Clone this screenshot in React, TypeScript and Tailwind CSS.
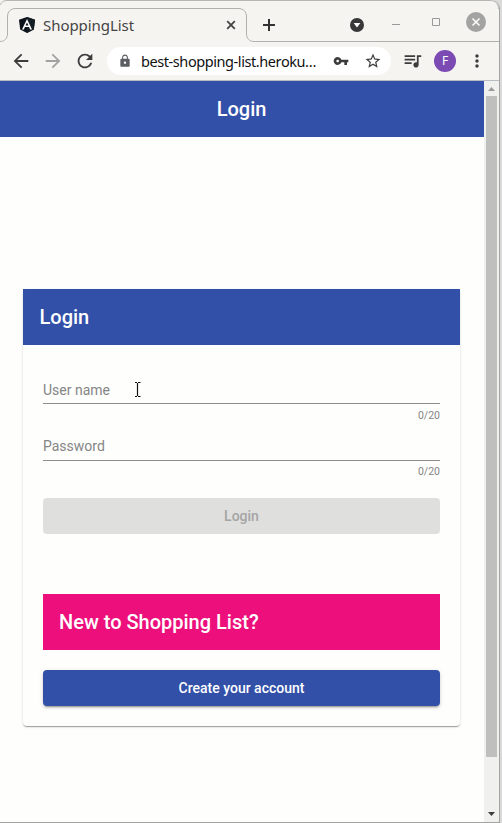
import React from "react";
import {
  MdArrowBack,
  MdArrowForward,
  MdRefresh,
  MdLock,
  MdVpnKey,
  MdStarBorder,
  MdQueueMusic,
  MdMoreVert,
} from "react-icons/md";

function AngularLogo() {
  return (
    <svg className="h-4 w-4 shrink-0" viewBox="0 0 16 16">
      <path d="M8 0L16 2.7L14.8 12.6L8 16L1.2 12.6L0 2.7Z" fill="#0b1219" />
      <path d="M8 0L16 2.7L14.8 12.6L8 16Z" fill="#151d24" />
      <path
        d="M8 1.9L3 12.4h1.9l1-2.4h4.2l1 2.4H13L8 1.9zM8 5.4l1.5 3.2h-3L8 5.4z"
        fill="#fff"
        fillRule="evenodd"
      />
    </svg>
  );
}

function TabStrip() {
  return (
    <div className="relative h-[41px] w-full">
      <svg className="absolute left-0 top-0" width="499" height="42" viewBox="0 0 499 42" fill="none">
        <path d="M0 41.5C5 41.5 7.5 38 7.5 34V17C7.5 11.5 10.500 8.500 16 8.500H238C243.500 8.500 246.500 11.500 246.500 17V34C246.500 38 249 41.500 254 41.500H499" stroke="#b0b0ad" />
        <path d="M0 5C1.500 2 3.500 .5 7 .5H490C495.500 .5 498.500 3.500 498.500 9" stroke="#b5b5b3" />
      </svg>
      <div className="relative flex h-full items-center pt-[9px]">
        <div className="flex w-[247px] items-center pl-[19px] pr-[11px]">
          <AngularLogo />
          <span className="ml-2 flex-1 whitespace-nowrap font-['Noto_Sans',sans-serif] text-[15px] leading-5 tracking-[-0.06px] text-[#454545]">
            ShoppingList
          </span>
          <svg width="10" height="10" viewBox="0 0 10 10" stroke="#444" strokeWidth="1.8">
            <path d="M1.200 1.200L8.800 8.800M8.800 1.200L1.200 8.800" />
          </svg>
        </div>
        <svg className="ml-4" width="12" height="12" viewBox="0 0 12 12" stroke="#333" strokeWidth="2">
          <path d="M6 0V12M0 6H12" />
        </svg>
        <svg className="ml-[75px]" width="14" height="14" viewBox="0 0 14 14">
          <circle cx="7" cy="7" r="7" fill="#383838" />
          <path d="M3.600 5H10.400L7 9.500Z" fill="#fff" />
        </svg>
        <div className="mb-[6px] ml-[28px] flex items-center">
          <svg width="9" height="9" viewBox="0 0 9 9">
            <path d="M0 6.500H8" stroke="#999" />
          </svg>
          <svg className="ml-[31px]" width="8" height="8" viewBox="0 0 8 8" fill="none">
            <path d="M.5 .5H7.500V7.500H.5Z" stroke="#999" />
          </svg>
          <svg className="ml-[26px]" width="20" height="20" viewBox="0 0 20 20">
            <circle cx="10" cy="10" r="10" fill="#a3a3a1" />
            <path d="M6.500 6.500L13.500 13.500M13.500 6.500L6.500 13.500" stroke="#fff" strokeWidth="1.500" />
          </svg>
        </div>
      </div>
    </div>
  );
}

function Toolbar() {
  return (
    <div className="flex h-[40px] items-center border-b border-[#b7bdc2] pl-[10px] text-[#3c3c3c]">
      <MdArrowBack size={22} />
      <MdArrowForward size={22} className="ml-[10px] text-[#a2a2a0]" />
      <MdRefresh size={22} className="ml-[10px]" />
      <div className="ml-[11px] flex h-7 w-[284px] items-center rounded-full bg-white pl-[11px] pr-[9px]">
        <MdLock size={14} className="shrink-0 text-[#5a5d61]" />
        <span className="ml-[9px] w-[184px] whitespace-nowrap font-['Noto_Sans',sans-serif] text-[14.500px] leading-5 tracking-[-0.420px] text-[#111]">
          best-shopping-list.heroku…
        </span>
        <MdVpnKey size={16} className="ml-[8px] shrink-0" />
        <MdStarBorder size={18} className="ml-[15px] shrink-0" />
      </div>
      <MdQueueMusic size={21} className="ml-[11px]" />
      <div className="ml-[11px] flex h-[22px] w-[22px] items-center justify-center rounded-full bg-[#7b4bb3] font-['Noto_Sans',sans-serif] text-[12px] leading-none text-white">
        F
      </div>
      <MdMoreVert size={20} className="ml-[11px]" />
    </div>
  );
}

function LimitCounter() {
  return <div className="text-right text-[10.500px] leading-[12px] text-[#858585]">0/20</div>;
}

function TextCursor() {
  return (
    <svg className="absolute left-[91px] top-[2px]" width="8" height="18" viewBox="0 0 8 18" fill="none">
      <path d="M1 1.500H7M3.500 2V16M1 16.500H7" stroke="#fff" strokeWidth="3" />
      <path d="M1 1.500H3M4 1.500H6.500M1 15.500H3M4 15.500H6.500M3.500 2V15" stroke="#111" strokeWidth="1.200" />
    </svg>
  );
}

function LoginCard() {
  return (
    <div className="ml-[23px] mt-[152px] h-[437px] w-[437px] rounded bg-[#fefefd] shadow-[0_2px_1px_-1px_rgba(0,0,0,0.2),0_1px_1px_0_rgba(0,0,0,0.14),0_1px_3px_0_rgba(0,0,0,0.12)]">
      <div className="flex h-14 items-center bg-[#3250a8] pl-[16.500px] text-[20px] font-medium text-white">
        Login
      </div>
      <div className="px-5 pt-[34px]">
        <div className="h-[57px]">
          <div className="relative mb-[6px] h-[25px] border-b border-[#8d8d8d] pt-[3px] text-[14px] leading-4 text-[#858585]">
            User name
            <TextCursor />
          </div>
          <LimitCounter />
        </div>
        <div className="h-[56px]">
          <div className="mb-[5px] h-[25px] border-b border-[#8d8d8d] pt-[2px] text-[14px] leading-4 text-[#858585]">
            Password
          </div>
          <LimitCounter />
        </div>
        <button className="mt-[6px] block h-9 w-full rounded bg-[#dfdfde] text-[14px] font-medium text-[#a5a5a4]">
          Login
        </button>
        <div className="mt-[60px] flex h-14 items-center bg-[#ec0f7c] pl-4 text-[20px] font-medium text-white">
          New to Shopping List?
        </div>
        <button className="mt-5 block h-9 w-full rounded bg-[#3250a8] text-[14px] font-medium text-white shadow-[0_3px_1px_-2px_rgba(0,0,0,0.2),0_2px_2px_0_rgba(0,0,0,0.14),0_1px_5px_0_rgba(0,0,0,0.12)]">
          Create your account
        </button>
      </div>
    </div>
  );
}

function Scrollbar() {
  return (
    <div className="flex w-[15px] flex-col items-center bg-[#f0f0ef]">
      <svg className="mt-[6px] shrink-0" width="7" height="4" viewBox="0 0 7 4">
        <path d="M0 4L3.500 0L7 4Z" fill="#9a9a99" />
      </svg>
      <div className="mt-[5px] h-[661px] w-[11px] shrink-0 bg-[#bfbfbe]" />
      <svg className="mt-[55px] shrink-0" width="7" height="4" viewBox="0 0 7 4">
        <path d="M0 0L3.500 4L7 0Z" fill="#3c3c3c" />
      </svg>
    </div>
  );
}

export default function App() {
  return (
    <div className="h-[823px] w-[502px] overflow-hidden bg-[#dadada] font-[Roboto,sans-serif]">
      <div className="flex h-[823px] w-[500px] flex-col overflow-hidden rounded-tr-[9px] border-b border-r border-[#a3a3a2] bg-[#f5f4f1]">
        <TabStrip />
        <Toolbar />
        <div className="flex min-h-0 flex-1">
          <div className="w-[484px] bg-[#fefefd]">
            <div className="flex h-14 items-center justify-center bg-[#3250a8] pr-[1px] text-[20px] font-medium text-white">
              Login
            </div>
            <LoginCard />
          </div>
          <Scrollbar />
        </div>
      </div>
    </div>
  );
}
